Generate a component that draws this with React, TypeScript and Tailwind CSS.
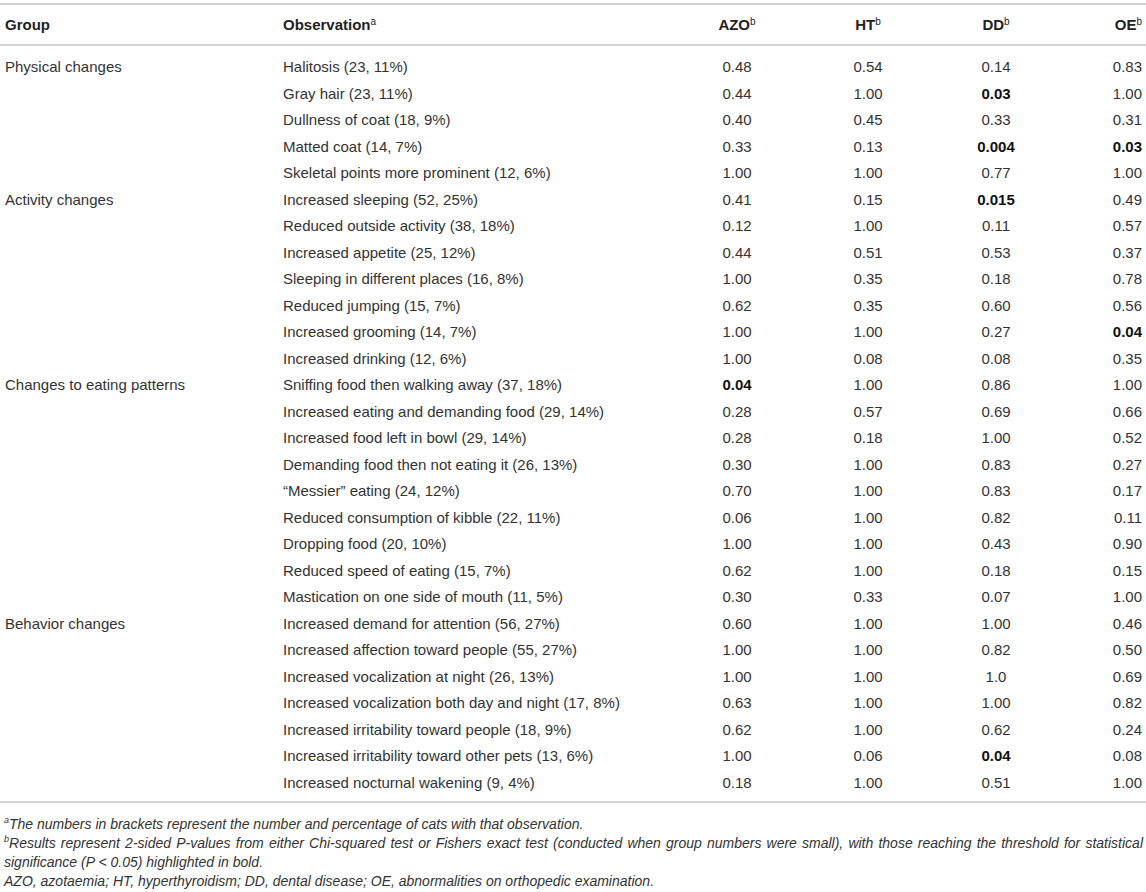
const groups: { name: string; rows: [string, string, string, string, string][] }[] = [
  {
    name: "Physical changes",
    rows: [
      ["Halitosis (23, 11%)", "0.48", "0.54", "0.14", "0.83"],
      ["Gray hair (23, 11%)", "0.44", "1.00", "*0.03", "1.00"],
      ["Dullness of coat (18, 9%)", "0.40", "0.45", "0.33", "0.31"],
      ["Matted coat (14, 7%)", "0.33", "0.13", "*0.004", "*0.03"],
      ["Skeletal points more prominent (12, 6%)", "1.00", "1.00", "0.77", "1.00"],
    ],
  },
  {
    name: "Activity changes",
    rows: [
      ["Increased sleeping (52, 25%)", "0.41", "0.15", "*0.015", "0.49"],
      ["Reduced outside activity (38, 18%)", "0.12", "1.00", "0.11", "0.57"],
      ["Increased appetite (25, 12%)", "0.44", "0.51", "0.53", "0.37"],
      ["Sleeping in different places (16, 8%)", "1.00", "0.35", "0.18", "0.78"],
      ["Reduced jumping (15, 7%)", "0.62", "0.35", "0.60", "0.56"],
      ["Increased grooming (14, 7%)", "1.00", "1.00", "0.27", "*0.04"],
      ["Increased drinking (12, 6%)", "1.00", "0.08", "0.08", "0.35"],
    ],
  },
  {
    name: "Changes to eating patterns",
    rows: [
      ["Sniffing food then walking away (37, 18%)", "*0.04", "1.00", "0.86", "1.00"],
      ["Increased eating and demanding food (29, 14%)", "0.28", "0.57", "0.69", "0.66"],
      ["Increased food left in bowl (29, 14%)", "0.28", "0.18", "1.00", "0.52"],
      ["Demanding food then not eating it (26, 13%)", "0.30", "1.00", "0.83", "0.27"],
      ["\u201cMessier\u201d eating (24, 12%)", "0.70", "1.00", "0.83", "0.17"],
      ["Reduced consumption of kibble (22, 11%)", "0.06", "1.00", "0.82", "0.11"],
      ["Dropping food (20, 10%)", "1.00", "1.00", "0.43", "0.90"],
      ["Reduced speed of eating (15, 7%)", "0.62", "1.00", "0.18", "0.15"],
      ["Mastication on one side of mouth (11, 5%)", "0.30", "0.33", "0.07", "1.00"],
    ],
  },
  {
    name: "Behavior changes",
    rows: [
      ["Increased demand for attention (56, 27%)", "0.60", "1.00", "1.00", "0.46"],
      ["Increased affection toward people (55, 27%)", "1.00", "1.00", "0.82", "0.50"],
      ["Increased vocalization at night (26, 13%)", "1.00", "1.00", "1.0", "0.69"],
      ["Increased vocalization both day and night (17, 8%)", "0.63", "1.00", "1.00", "0.82"],
      ["Increased irritability toward people (18, 9%)", "0.62", "1.00", "0.62", "0.24"],
      ["Increased irritability toward other pets (13, 6%)", "1.00", "0.06", "*0.04", "0.08"],
      ["Increased nocturnal wakening (9, 4%)", "0.18", "1.00", "0.51", "1.00"],
    ],
  },
];

function Val({ v }: { v: string }) {
  if (v.startsWith("*")) return <span className="font-bold text-[#111]">{v.slice(1)}</span>;
  return <>{v}</>;
}

export default function App() {
  return (
    <div className="w-[1146px] h-[892px] bg-white pt-[3px] text-[#333] font-['Liberation_Sans',Arial,sans-serif]">
      <table className="w-full table-fixed border-collapse text-[15px]">
        <colgroup>
          <col className="w-[278px]" />
          <col className="w-[394px]" />
          <col className="w-[130px]" />
          <col className="w-[132px]" />
          <col className="w-[124px]" />
          <col className="w-[88px]" />
        </colgroup>
        <thead>
          <tr className="h-[41px] border-t-2 border-b-2 border-[#d2d2d2] font-bold text-[#222]">
            <th className="pl-[5px] pt-[2px] text-left">Group</th>
            <th className="pl-[5px] pt-[2px] text-left">
              Observation<sup className="text-[10px] font-normal">a</sup>
            </th>
            <th className="pt-[2px] text-center">
              AZO<sup className="text-[10px] font-normal">b</sup>
            </th>
            <th className="pt-[2px] text-center">
              HT<sup className="text-[10px] font-normal">b</sup>
            </th>
            <th className="pt-[2px] text-center">
              DD<sup className="text-[10px] font-normal">b</sup>
            </th>
            <th className="pr-[4px] pt-[2px] text-right">
              OE<sup className="text-[10px] font-normal">b</sup>
            </th>
          </tr>
        </thead>
        <tbody>
          <tr className="h-[8px]">
            <td colSpan={6} />
          </tr>
          {groups.map((g) =>
            g.rows.map((r, i) => (
              <tr key={r[0]} className="h-[26.5px]">
                <td className="pl-[5px] pt-[2px]">{i === 0 ? g.name : ""}</td>
                <td className="pl-[5px] pt-[2px] whitespace-nowrap">{r[0]}</td>
                <td className="pt-[2px] text-center"><Val v={r[1]} /></td>
                <td className="pt-[2px] text-center"><Val v={r[2]} /></td>
                <td className="pt-[2px] text-center"><Val v={r[3]} /></td>
                <td className="pr-[4px] pt-[2px] text-right"><Val v={r[4]} /></td>
              </tr>
            ))
          )}
          <tr className="h-[7px] border-b-2 border-[#d2d2d2]">
            <td colSpan={6} />
          </tr>
        </tbody>
      </table>
      <div className="mt-[12px] pl-[4px] pr-[3px] text-[14px] leading-[19px] italic">
        <p>
          <span className="align-top text-[9px] leading-[11px]">a</span>The numbers in brackets represent the number and percentage of cats with that observation.
        </p>
        <p className="text-justify">
          <span className="align-top text-[9px] leading-[11px]">b</span>
          <span>Results represent 2-sided P-values from either Chi-squared test or Fishers exact test (conducted when group numbers were small), with those reaching the threshold for statistical </span>
          <span>significance (P &lt; 0.05) highlighted in bold.</span>
        </p>
        <p>AZO, azotaemia; HT, hyperthyroidism; DD, dental disease; OE, abnormalities on orthopedic examination.</p>
      </div>
    </div>
  );
}
